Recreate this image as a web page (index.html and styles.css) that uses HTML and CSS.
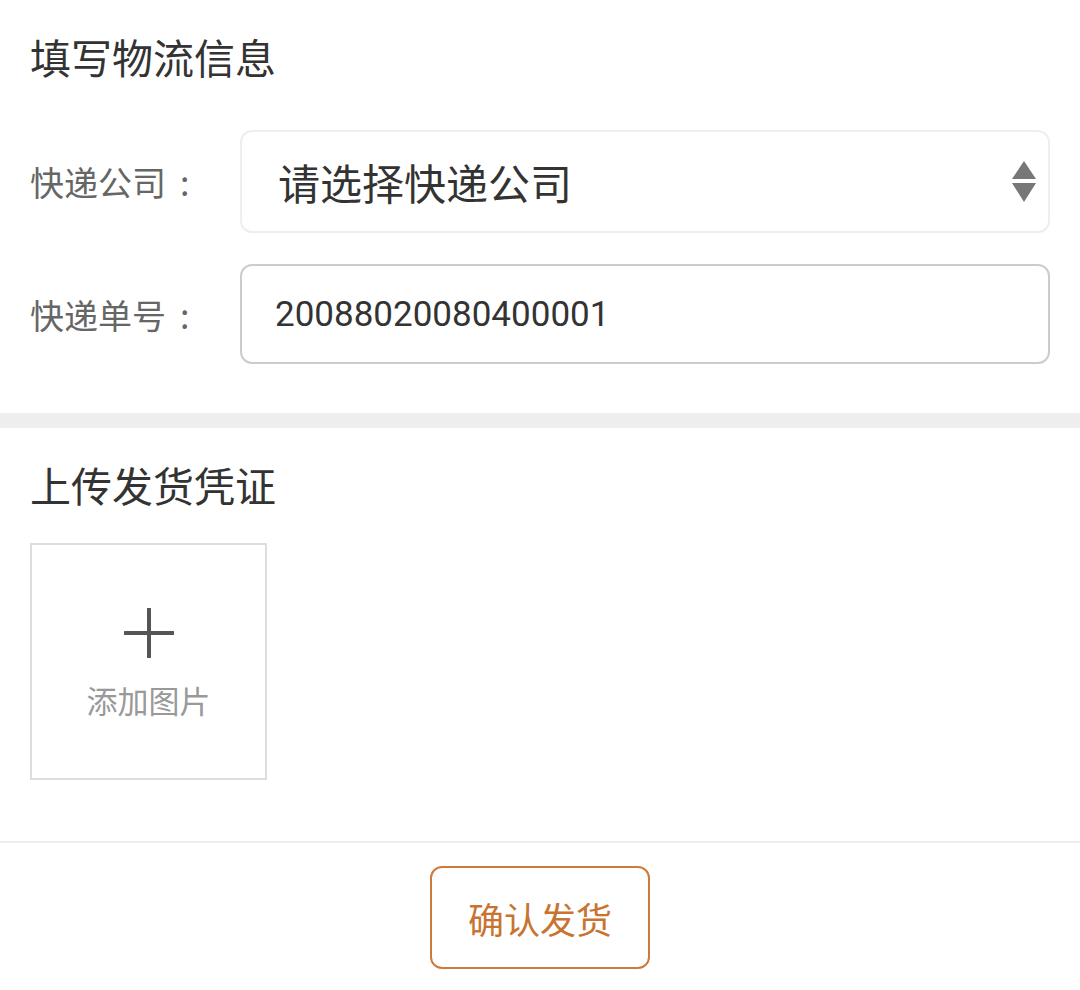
FILE: index.html
```html
<!DOCTYPE html>
<html lang="zh-CN">
<head>
    <meta charset="UTF-8">
    <meta name="viewport" content="width=device-width, initial-scale=1.0">
    <title>填写物流信息</title>
    <link rel="stylesheet" href="styles.css">
</head>
<body>
    <div class="page">
        <div class="section logistics">
            <h2 class="title">填写物流信息</h2>
            <div class="row">
                <label class="label">快递公司<span class="colon">:</span></label>
                <div class="select">
                    <span>请选择快递公司</span>
                    <svg class="arrows" width="24" height="42" viewBox="0 0 24 42">
                        <polygon points="12,0 24,18 0,18" fill="#777"/>
                        <polygon points="0,22 24,22 12,41" fill="#777"/>
                    </svg>
                </div>
            </div>
            <div class="row">
                <label class="label">快递单号<span class="colon">:</span></label>
                <input class="input" type="text" value="20088020080400001">
            </div>
        </div>

        <div class="band"></div>

        <div class="section upload">
            <h2 class="title">上传发货凭证</h2>
            <div class="addPic">
                <svg width="50" height="50" viewBox="0 0 50 50">
                    <path d="M25 1 V49 M1 25 H49" stroke="#555" stroke-width="4" stroke-linecap="round"/>
                </svg>
                <span>添加图片</span>
            </div>
        </div>

        <div class="footer">
            <button class="confirm">确认发货</button>
        </div>
    </div>
</body>
</html>
```

FILE: styles.css
```css
body {
    margin: 0;
    background: #fff;
    font-family: "Noto Sans CJK SC", "Noto Sans", sans-serif;
    color: #333;
}
.section {
    padding: 0 30px;
}
.title {
    margin: 0;
    font-size: 41px;
    font-weight: normal;
    line-height: 42px;
    color: #333;
}
.logistics {
    padding-top: 35px;
    padding-bottom: 49px;
}
.logistics .title {
    margin-bottom: 53px;
}
.row {
    display: flex;
    align-items: center;
}
.row + .row {
    margin-top: 31px;
}
.label {
    width: 210px;
    font-size: 34px;
    color: #666;
    flex-shrink: 0;
}
.colon {
    margin-left: 14px;
}
.select {
    flex: 1;
    height: 103px;
    box-sizing: border-box;
    border: 2px solid #eee;
    border-radius: 12px;
    display: flex;
    align-items: center;
    justify-content: space-between;
    padding: 0 12px 0 36px;
    font-size: 42px;
    color: #333;
}
.arrows {
    display: block;
}
.input {
    flex: 1;
    height: 100px;
    box-sizing: border-box;
    border: 2px solid #ccc;
    border-radius: 12px;
    padding: 0 33px;
    font-family: Roboto, "Noto Sans", sans-serif;
    font-size: 35px;
    color: #333;
    outline: none;
    background: #fff;
}
.band {
    height: 15px;
    background: #eeeeee;
}
.upload {
    padding-top: 35px;
    padding-bottom: 61px;
}
.upload .title {
    margin-bottom: 38px;
}
.addPic {
    width: 237px;
    height: 237px;
    box-sizing: border-box;
    border: 2px solid #ddd;
    display: flex;
    flex-direction: column;
    align-items: center;
    justify-content: center;
    gap: 26px;
    font-size: 31px;
    color: #999;
}
.addPic span {
    line-height: 31px;
}
.footer {
    border-top: 2px solid #eee;
    padding-top: 23px;
    display: flex;
    justify-content: center;
}
.confirm {
    width: 220px;
    height: 103px;
    border: 2.5px solid #d07a3a;
    border-radius: 12px;
    background: #fff;
    color: #c87430;
    font-family: "Noto Sans CJK SC", sans-serif;
    font-size: 36px;
}
```
